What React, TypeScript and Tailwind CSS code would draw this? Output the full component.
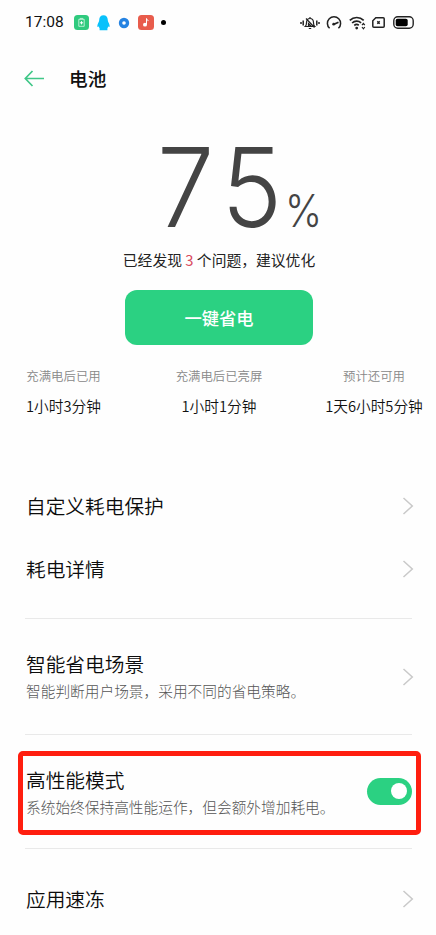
import React from 'react';
import clsx from 'clsx';

interface Stat {
  label: string;
  value: string;
  className: string;
}

interface RowProps {
  title: string;
  description?: string;
  className?: string;
  children?: React.ReactNode;
}

const stats: Stat[] = [
  { label: '充满电后已用', value: '1小时3分钟', className: 'w-[75px]' },
  { label: '充满电后已亮屏', value: '1小时1分钟', className: 'ml-[74px] w-[88px]' },
  { label: '预计还可用', value: '1天6小时5分钟', className: 'ml-[61px] w-[100px]' },
];

const StatusBar = () => (
  <div className="flex h-[45px] items-center pl-[25px] pr-[22px]">
    <span className="w-[38px] whitespace-nowrap font-[Roboto] text-[15.5px] leading-none text-[#111]">
      17:08
    </span>
    <svg className="ml-[11px]" width="15" height="15" viewBox="0 0 15 15" fill="none">
      <rect width="15" height="15" rx="3.5" fill="#2fca7e" />
      <path d="M6.2 4.2V3.4h2.6v.8M4.8 4.3h5.4v7H4.8z" stroke="#d8f7e7" strokeWidth="0.8" />
      <path d="M7.5 6.2v3.2M5.9 7.8h3.2" stroke="#fff" strokeWidth="1" />
    </svg>
    <svg className="ml-2" width="13" height="16" viewBox="0 0 13 16">
      <path
        d="M6.5.3c2.7 0 4.2 2 4.3 4.7 0 1.1.4 1.8 1 3 .8 1.500 1 3.300.7 3.800-.4.4-.8 0-1.200-.5-.1.800-.4 1.500-.9 2v2H2.600v-2c-.5-.5-.8-1.200-.9-2-.4.500-.8.900-1.200.5C.2 11.300.4 9.500 1.200 8c.6-1.200 1-1.900 1-3C2.300 2.300 3.800.3 6.500.3z"
        fill="#09c1fb"
      />
    </svg>
    <svg className="ml-2" width="12" height="12" viewBox="0 0 12 12">
      <circle cx="6" cy="6" r="5.2" fill="#2583e2" />
      <circle cx="6" cy="6" r="1.8" fill="#fff" />
    </svg>
    <svg className="ml-2" width="16" height="15" viewBox="0 0 16 15">
      <rect width="16" height="15" rx="3.5" fill="#e85c4c" />
      <ellipse cx="7" cy="9.7" rx="2" ry="1.9" fill="#fff" />
      <path d="M8.500 9.700V3.500c.3 1.200 1.700 1.100 1.500 2.600" stroke="#fff" strokeWidth="1" fill="none" />
    </svg>
    <span className="ml-[7px] h-[5px] w-[5px] rounded-full bg-black" />

    <div className="ml-auto flex items-center">
      <svg width="20" height="14" viewBox="0 0 20 14" fill="none" stroke="#222" strokeWidth="1.2">
        <path d="M1 6v2M3.200 4.500v5M16.800 4.500v5M19 6v2" strokeWidth="1.5" />
        <path d="M5.300 10.500c1-.9 1.200-1.800 1.200-3.700C6.500 4.300 7.900 2.500 10 2.500s3.500 1.800 3.500 4.300c0 1.900.2 2.800 1.200 3.700zM10 1v1.500M8.800 12.500h2.400M6 2.500l8.500 9" />
        <path d="M8.500 7.500v2.700h2.700z" />
      </svg>
      <svg className="ml-[6px]" width="16" height="14" viewBox="0 0 16 14" fill="none" stroke="#222">
        <path d="M3.600 12.300a6.600 6.600 0 1 1 8.800 0" strokeWidth="1.5" />
        <path d="M8 8.200l4.500-2" strokeWidth="1.7" />
        <circle cx="7.7" cy="8.2" r="1.4" fill="#222" stroke="none" />
      </svg>
      <svg className="ml-[7px]" width="17" height="14" viewBox="0 0 17 14" fill="none" stroke="#222">
        <path
          d="M.8 4.300a10 10 0 0 1 13.900 0M3.100 7a6.700 6.700 0 0 1 9-.2M5.300 9.500a3.600 3.600 0 0 1 4.500-.2"
          strokeWidth="1.7"
        />
        <circle cx="7.7" cy="12.1" r="1.4" fill="#222" stroke="none" />
        <path d="M13 9.200l1.400-1.800 1.400 1.800M13 11l1.400 1.800 1.400-1.800" strokeWidth="1.2" />
      </svg>
      <svg className="ml-[6px]" width="13" height="11" viewBox="0 0 13 11" fill="none" stroke="#222">
        <path d="M3.800.8h7.400q1 0 1 1v7.400q0 1-1 1H1.800q-1 0-1-1V3.700z" strokeWidth="1.5" />
        <path d="M5.300 4.300l2.400 2.400M7.700 4.300L5.300 6.700" strokeWidth="1.4" />
      </svg>
      <svg className="ml-2" width="21" height="13" viewBox="0 0 21 13" fill="none">
        <rect x=".8" y=".8" width="19.4" height="11.4" rx="4" stroke="#222" strokeWidth="1.4" />
        <rect x="2.7" y="2.7" width="12" height="7.6" rx="1.8" fill="#000" />
      </svg>
    </div>
  </div>
);

const Chevron = () => (
  <svg width="12" height="18" viewBox="0 0 12 18" fill="none" stroke="#c9c9c9" strokeWidth="1.5">
    <path d="M1.500 1l8.800 8-8.800 8" />
  </svg>
);

const Row: React.FC<RowProps> = ({ title, description, className, children }) => (
  <div className={clsx('flex items-center justify-between', className)}>
    <div className="whitespace-nowrap">
      <div className="text-[19.7px] font-[350] leading-7 text-[#0c0c0c]">{title}</div>
      {description && (
        <div className="text-[14.7px] font-light leading-[26px] text-[#555]">{description}</div>
      )}
    </div>
    {children || <Chevron />}
  </div>
);

const Divider = () => <div className="ml-[25px] mr-6 h-px bg-[#e9e9e9]" />;

const App = () => (
  <div className="h-[935px] w-[436px] overflow-hidden bg-[#fefefe] font-['Noto_Sans_CJK_SC',sans-serif]">
    <StatusBar />

    <div className="flex h-[66px] items-center pl-6">
      <svg width="21" height="17" viewBox="0 0 21 17" fill="none" stroke="#40c788" strokeWidth="1.7">
        <path d="M8.500 1L1.300 8.500 8.500 16M1.300 8.500H20" />
      </svg>
      <h1 className="ml-6 text-[18.7px] font-medium leading-7 text-[#111]">电池</h1>
    </div>

    <div className="flex h-[137px] items-baseline whitespace-nowrap pl-[157px] pt-[21px] font-[Inter] font-light text-[#444]">
      <span className="w-[128px] origin-left scale-x-[0.93] text-[110px] leading-[110px] tracking-[9px]">
        75
      </span>
      <span className="origin-left scale-x-[0.88] text-[45px] leading-none">%</span>
    </div>

    <div className="flex flex-col items-center pl-0.5">
      <p className="h-6 whitespace-nowrap text-[14.8px] leading-6 text-[#222]">
        已经发现 <span className="text-[#d94b60]">3</span> 个问题，建议优化
      </p>
      <button className="mt-[18px] h-[55px] w-[188px] rounded-xl bg-[#2bd182] text-[17.3px] font-medium text-white">
        一键省电
      </button>
    </div>

    <div className="mt-[21px] flex pl-[26px]">
      {stats.map((stat) => (
        <div key={stat.label} className={clsx('shrink-0 whitespace-nowrap text-center', stat.className)}>
          <div className="text-[12.4px] font-[350] leading-5 text-[#888]">{stat.label}</div>
          <div className="mt-2.5 text-[14.7px] font-[350] leading-5 text-[#111]">{stat.value}</div>
        </div>
      ))}
    </div>

    <div className="mt-[58px] pl-[26px] pr-[22px]">
      <Row title="自定义耗电保护" className="h-[63px]" />
      <Row title="耗电详情" className="h-[63px]" />
    </div>
    <div className="h-[18px]" />
    <Divider />
    <Row
      title="智能省电场景"
      description="智能判断用户场景，采用不同的省电策略。"
      className="h-[115px] pl-[26px] pr-[22px]"
    />
    <Divider />
    <div className="ml-[18px] mt-4 h-[84px] w-[403px] rounded-[5px] border-[5px] border-[#ff1e0f]">
      <Row
        title="高性能模式"
        description="系统始终保持高性能运作，但会额外增加耗电。"
        className="h-[74px] pl-[3px] pr-1"
      >
        <div className="mb-1 flex h-[27px] w-[45px] items-center justify-end rounded-full bg-[#2bd182] pr-[5px]">
          <div className="h-4 w-4 rounded-full bg-white" />
        </div>
      </Row>
    </div>
    <div className="h-[13px]" />
    <Divider />
    <Row title="应用速冻" className="h-[99px] pl-[26px] pr-[22px]" />
  </div>
);

export default App;
